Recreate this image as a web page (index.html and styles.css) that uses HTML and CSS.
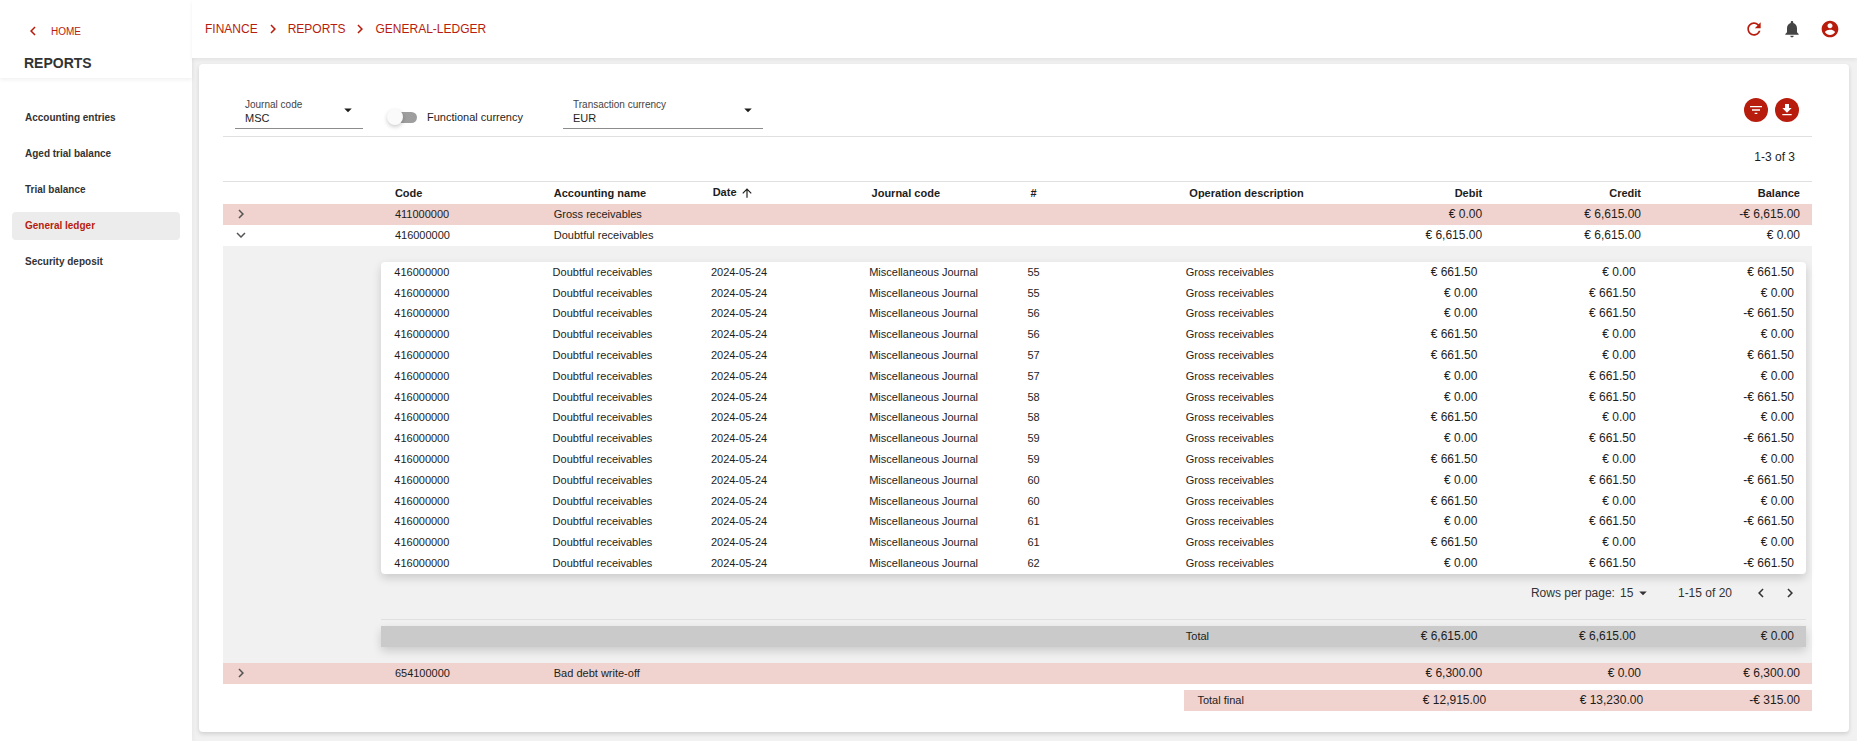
FILE: index.html
```html
<!DOCTYPE html>
<html lang="en">
<head>
    <meta charset="UTF-8">
    <meta name="viewport" content="width=device-width, initial-scale=1.0">
    <title>General ledger</title>
    <link rel="stylesheet" href="styles.css">
</head>
<body>
    <!-- Icons shared by the page -->
    <svg class="icon-defs" aria-hidden="true">
        <symbol id="chevron-left" viewBox="0 0 24 24"><path d="M15.41 7.41 14 6l-6 6 6 6 1.41-1.41L10.83 12z"/></symbol>
        <symbol id="chevron-right" viewBox="0 0 24 24"><path d="M10 6 8.59 7.41 13.17 12l-4.58 4.59L10 18l6-6z"/></symbol>
        <symbol id="chevron-down" viewBox="0 0 24 24"><path d="M16.59 8.59 12 13.17 7.41 8.59 6 10l6 6 6-6z"/></symbol>
        <symbol id="arrow-drop-down" viewBox="0 0 24 24"><path d="m7 10 5 5 5-5z"/></symbol>
        <symbol id="arrow-up" viewBox="0 0 24 24"><path d="m4 12 1.41 1.41L11 7.83V20h2V7.83l5.58 5.59L20 12l-8-8z"/></symbol>
        <symbol id="refresh" viewBox="0 0 24 24"><path d="M17.65 6.35C16.2 4.9 14.21 4 12 4c-4.42 0-7.99 3.58-7.99 8s3.57 8 7.99 8c3.73 0 6.84-2.55 7.73-6h-2.08c-.82 2.33-3.04 4-5.65 4-3.31 0-6-2.69-6-6s2.69-6 6-6c1.66 0 3.14.69 4.22 1.78L13 11h7V4z"/></symbol>
        <symbol id="bell" viewBox="0 0 24 24"><path d="M12 22c1.1 0 2-.9 2-2h-4c0 1.1.89 2 2 2m6-6v-5c0-3.07-1.64-5.64-4.5-6.32V4c0-.83-.67-1.5-1.5-1.5s-1.5.67-1.5 1.5v.68C7.63 5.36 6 7.92 6 11v5l-2 2v1h16v-1z"/></symbol>
        <symbol id="account" viewBox="0 0 24 24"><path d="M12 2C6.48 2 2 6.48 2 12s4.48 10 10 10 10-4.48 10-10S17.52 2 12 2m0 3c1.66 0 3 1.34 3 3s-1.34 3-3 3-3-1.34-3-3 1.34-3 3-3m0 14.2c-2.5 0-4.71-1.28-6-3.22.03-1.99 4-3.08 6-3.08 1.99 0 5.97 1.09 6 3.08-1.29 1.94-3.5 3.22-6 3.22"/></symbol>
        <symbol id="filter" viewBox="0 0 24 24"><path d="M10 18h4v-2h-4zM3 6v2h18V6zm3 7h12v-2H6z"/></symbol>
        <symbol id="download" viewBox="0 0 24 24"><path d="M19 9h-4V3H9v6H5l7 7zM5 18v2h14v-2z"/></symbol>
    </svg>

    <aside class="sidebar">
        <div class="sidebar-header">
            <a href="#" class="home-link"><svg class="icon"><use href="#chevron-left"/></svg>HOME</a>
            <h1>REPORTS</h1>
        </div>
        <nav class="menu">
            <a href="#">Accounting entries</a>
            <a href="#">Aged trial balance</a>
            <a href="#">Trial balance</a>
            <a href="#" class="active">General ledger</a>
            <a href="#">Security deposit</a>
        </nav>
    </aside>

    <div class="page">
        <header class="topbar">
            <nav class="breadcrumbs">
                <a href="#">FINANCE</a>
                <svg class="icon"><use href="#chevron-right"/></svg>
                <a href="#">REPORTS</a>
                <svg class="icon"><use href="#chevron-right"/></svg>
                <a href="#">GENERAL-LEDGER</a>
            </nav>
            <div class="topbar-actions">
                <button aria-label="Refresh"><svg><use href="#refresh"/></svg></button>
                <button aria-label="Notifications" class="bell"><svg><use href="#bell"/></svg></button>
                <button aria-label="Account"><svg><use href="#account"/></svg></button>
            </div>
        </header>

        <main class="card">
            <div class="toolbar">
                <div class="field field-journal">
                    <label for="journal">Journal code</label>
                    <select id="journal"><option>MSC</option></select>
                    <svg class="icon"><use href="#arrow-drop-down"/></svg>
                </div>
                <label class="switch">
                    <input type="checkbox">
                    <span>Functional currency</span>
                </label>
                <div class="field field-currency">
                    <label for="currency">Transaction currency</label>
                    <select id="currency"><option>EUR</option></select>
                    <svg class="icon"><use href="#arrow-drop-down"/></svg>
                </div>
                <div class="toolbar-actions">
                    <button aria-label="Filter"><svg><use href="#filter"/></svg></button>
                    <button aria-label="Download"><svg><use href="#download"/></svg></button>
                </div>
            </div>

            <div class="count">1-3 of 3</div>

            <table class="ledger">
                <thead>
                    <tr>
                        <th></th>
                        <th>Code</th>
                        <th>Accounting name</th>
                        <th>Date <svg class="sort"><use href="#arrow-up"/></svg></th>
                        <th>Journal code</th>
                        <th>#</th>
                        <th>Operation description</th>
                        <th class="amount">Debit</th>
                        <th class="amount">Credit</th>
                        <th class="amount">Balance</th>
                    </tr>
                </thead>
                <tbody>
                    <tr class="highlight">
                        <td><button class="expand" aria-label="Expand"><svg class="icon"><use href="#chevron-right"/></svg></button></td>
                        <td>411000000</td>
                        <td>Gross receivables</td>
                        <td></td><td></td><td></td><td></td>
                        <td class="amount">€ 0.00</td>
                        <td class="amount">€ 6,615.00</td>
                        <td class="amount">-€ 6,615.00</td>
                    </tr>
                    <tr>
                        <td><button class="expand" aria-label="Collapse"><svg class="icon"><use href="#chevron-down"/></svg></button></td>
                        <td>416000000</td>
                        <td>Doubtful receivables</td>
                        <td></td><td></td><td></td><td></td>
                        <td class="amount">€ 6,615.00</td>
                        <td class="amount">€ 6,615.00</td>
                        <td class="amount">€ 0.00</td>
                    </tr>
                    <tr>
                        <td colspan="10" class="details">
                            <div class="details-content">
                                <table class="entries">
                                    <tbody>
                                        <tr><td>416000000</td><td>Doubtful receivables</td><td>2024-05-24</td><td>Miscellaneous Journal</td><td>55</td><td>Gross receivables</td><td class="amount">€ 661.50</td><td class="amount">€ 0.00</td><td class="amount">€ 661.50</td></tr>
                                        <tr><td>416000000</td><td>Doubtful receivables</td><td>2024-05-24</td><td>Miscellaneous Journal</td><td>55</td><td>Gross receivables</td><td class="amount">€ 0.00</td><td class="amount">€ 661.50</td><td class="amount">€ 0.00</td></tr>
                                        <tr><td>416000000</td><td>Doubtful receivables</td><td>2024-05-24</td><td>Miscellaneous Journal</td><td>56</td><td>Gross receivables</td><td class="amount">€ 0.00</td><td class="amount">€ 661.50</td><td class="amount">-€ 661.50</td></tr>
                                        <tr><td>416000000</td><td>Doubtful receivables</td><td>2024-05-24</td><td>Miscellaneous Journal</td><td>56</td><td>Gross receivables</td><td class="amount">€ 661.50</td><td class="amount">€ 0.00</td><td class="amount">€ 0.00</td></tr>
                                        <tr><td>416000000</td><td>Doubtful receivables</td><td>2024-05-24</td><td>Miscellaneous Journal</td><td>57</td><td>Gross receivables</td><td class="amount">€ 661.50</td><td class="amount">€ 0.00</td><td class="amount">€ 661.50</td></tr>
                                        <tr><td>416000000</td><td>Doubtful receivables</td><td>2024-05-24</td><td>Miscellaneous Journal</td><td>57</td><td>Gross receivables</td><td class="amount">€ 0.00</td><td class="amount">€ 661.50</td><td class="amount">€ 0.00</td></tr>
                                        <tr><td>416000000</td><td>Doubtful receivables</td><td>2024-05-24</td><td>Miscellaneous Journal</td><td>58</td><td>Gross receivables</td><td class="amount">€ 0.00</td><td class="amount">€ 661.50</td><td class="amount">-€ 661.50</td></tr>
                                        <tr><td>416000000</td><td>Doubtful receivables</td><td>2024-05-24</td><td>Miscellaneous Journal</td><td>58</td><td>Gross receivables</td><td class="amount">€ 661.50</td><td class="amount">€ 0.00</td><td class="amount">€ 0.00</td></tr>
                                        <tr><td>416000000</td><td>Doubtful receivables</td><td>2024-05-24</td><td>Miscellaneous Journal</td><td>59</td><td>Gross receivables</td><td class="amount">€ 0.00</td><td class="amount">€ 661.50</td><td class="amount">-€ 661.50</td></tr>
                                        <tr><td>416000000</td><td>Doubtful receivables</td><td>2024-05-24</td><td>Miscellaneous Journal</td><td>59</td><td>Gross receivables</td><td class="amount">€ 661.50</td><td class="amount">€ 0.00</td><td class="amount">€ 0.00</td></tr>
                                        <tr><td>416000000</td><td>Doubtful receivables</td><td>2024-05-24</td><td>Miscellaneous Journal</td><td>60</td><td>Gross receivables</td><td class="amount">€ 0.00</td><td class="amount">€ 661.50</td><td class="amount">-€ 661.50</td></tr>
                                        <tr><td>416000000</td><td>Doubtful receivables</td><td>2024-05-24</td><td>Miscellaneous Journal</td><td>60</td><td>Gross receivables</td><td class="amount">€ 661.50</td><td class="amount">€ 0.00</td><td class="amount">€ 0.00</td></tr>
                                        <tr><td>416000000</td><td>Doubtful receivables</td><td>2024-05-24</td><td>Miscellaneous Journal</td><td>61</td><td>Gross receivables</td><td class="amount">€ 0.00</td><td class="amount">€ 661.50</td><td class="amount">-€ 661.50</td></tr>
                                        <tr><td>416000000</td><td>Doubtful receivables</td><td>2024-05-24</td><td>Miscellaneous Journal</td><td>61</td><td>Gross receivables</td><td class="amount">€ 661.50</td><td class="amount">€ 0.00</td><td class="amount">€ 0.00</td></tr>
                                        <tr><td>416000000</td><td>Doubtful receivables</td><td>2024-05-24</td><td>Miscellaneous Journal</td><td>62</td><td>Gross receivables</td><td class="amount">€ 0.00</td><td class="amount">€ 661.50</td><td class="amount">-€ 661.50</td></tr>
                                    </tbody>
                                </table>

                                <div class="pagination">
                                    <label for="rows">Rows per page:</label>
                                    <div class="rows-select">
                                        <select id="rows"><option>15</option></select>
                                        <svg class="icon"><use href="#arrow-drop-down"/></svg>
                                    </div>
                                    <span class="range">1-15 of 20</span>
                                    <button aria-label="Previous page"><svg class="icon"><use href="#chevron-left"/></svg></button>
                                    <button aria-label="Next page"><svg class="icon"><use href="#chevron-right"/></svg></button>
                                </div>

                                <table class="subtotal">
                                    <tbody>
                                        <tr>
                                            <td colspan="5"></td>
                                            <td>Total</td>
                                            <td class="amount">€ 6,615.00</td>
                                            <td class="amount">€ 6,615.00</td>
                                            <td class="amount">€ 0.00</td>
                                        </tr>
                                    </tbody>
                                </table>
                            </div>
                        </td>
                    </tr>
                    <tr class="highlight">
                        <td><button class="expand" aria-label="Expand"><svg class="icon"><use href="#chevron-right"/></svg></button></td>
                        <td>654100000</td>
                        <td>Bad debt write-off</td>
                        <td></td><td></td><td></td><td></td>
                        <td class="amount">€ 6,300.00</td>
                        <td class="amount">€ 0.00</td>
                        <td class="amount">€ 6,300.00</td>
                    </tr>
                </tbody>
            </table>

            <table class="total-final">
                <tbody>
                    <tr class="highlight">
                        <td>Total final</td>
                        <td class="amount">€ 12,915.00</td>
                        <td class="amount">€ 13,230.00</td>
                        <td class="amount">-€ 315.00</td>
                    </tr>
                </tbody>
            </table>
        </main>
    </div>
</body>
</html>
```
FILE: styles.css
```css
* {
    box-sizing: border-box;
}

body {
    margin: 0;
    min-height: 100vh;
    display: flex;
    background-color: #f1f1f1;
    color: #1d1d1b;
    font-family: Arial, "Liberation Sans", sans-serif;
    font-size: 11px;
}

a {
    color: #b71c0c;
    text-decoration: none;
}

a:hover {
    text-decoration: underline;
}

button {
    display: flex;
    align-items: center;
    justify-content: center;
    padding: 0;
    border: none;
    background: none;
    color: inherit;
    cursor: pointer;
}

select {
    appearance: none;
    padding: 0;
    border: none;
    background: none;
    color: inherit;
    font: inherit;
}

svg {
    fill: currentColor;
}

.icon-defs {
    display: none;
}

.icon {
    width: 18px;
    height: 18px;
}

/* Sidebar */
.sidebar {
    flex: 0 0 192px;
    background-color: #fff;
    box-shadow: 0 0 6px rgba(0, 0, 0, 0.06);
}

.sidebar-header {
    height: 78px;
    padding: 22px 24px 0;
    box-shadow: 0 2px 4px rgba(0, 0, 0, 0.06);
}

.home-link {
    display: flex;
    align-items: center;
    gap: 9px;
    font-size: 10px;
}

.sidebar h1 {
    margin: 15px 0 0;
    font-size: 14px;
    line-height: 16px;
    color: #333;
}

.menu {
    display: flex;
    flex-direction: column;
    gap: 8px;
    padding: 26px 12px;
}

.menu a {
    padding: 0 13px;
    border-radius: 4px;
    color: #333;
    font-size: 10px;
    font-weight: bold;
    line-height: 28px;
}

.menu a.active {
    background-color: #ececec;
    color: #b71c0c;
}

/* Top bar */
.page {
    flex: 1;
    min-width: 0;
}

.topbar {
    display: flex;
    align-items: center;
    justify-content: space-between;
    height: 58px;
    padding: 0 17px 0 13px;
    background-color: #fff;
    box-shadow: 0 2px 4px rgba(0, 0, 0, 0.06);
}

.breadcrumbs {
    display: flex;
    align-items: center;
    gap: 6px;
    color: #b71c0c;
    font-size: 12px;
}

.topbar-actions {
    display: flex;
    gap: 18px;
    color: #b71c0c;
}

.topbar-actions svg {
    width: 20px;
    height: 20px;
}

.topbar-actions .bell {
    color: #444;
}

/* Card */
.card {
    margin: 6px 8px 10px 7px;
    padding: 28px 37px 21px 24px;
    background-color: #fff;
    border-radius: 4px;
    box-shadow: 0 2px 4px rgba(0, 0, 0, 0.14);
}

.toolbar {
    display: flex;
    padding: 6px 13px 7px 12px;
    border-bottom: 1px solid #e0e0e0;
}

.field {
    display: grid;
    grid-template: 14px 16px / 1fr 18px;
    padding: 0 6px 0 10px;
    border-bottom: 1px solid #8c8c8c;
}

.field label {
    grid-area: 1 / 1;
    color: #444;
    font-size: 10px;
    line-height: 14px;
}

.field select {
    grid-area: 2 / 1 / 3 / 3;
    margin-bottom: 5px;
}

.field .icon {
    grid-area: 1 / 2 / 3 / 3;
    margin-top: 3px;
    pointer-events: none;
}

.field-journal {
    width: 128px;
}

.field-currency {
    width: 200px;
    margin-left: 40px;
}

.switch {
    display: flex;
    align-items: center;
    gap: 10px;
    margin-left: 28px;
    padding-top: 7px;
}

.switch input {
    appearance: none;
    display: flex;
    align-items: center;
    width: 26px;
    height: 11px;
    margin: 0;
    border-radius: 6px;
    background-color: #9e9e9e;
}

.switch input::before {
    content: "";
    width: 16px;
    height: 16px;
    margin-left: -4px;
    border-radius: 50%;
    background-color: #fafafa;
    box-shadow: 0 2px 4px rgba(0, 0, 0, 0.2);
}

.switch input:checked::before {
    margin-left: 14px;
}

.toolbar-actions {
    display: flex;
    gap: 7px;
    margin-left: auto;
}

.toolbar-actions button {
    width: 24px;
    height: 24px;
    border-radius: 50%;
    background-color: #b71c0c;
    color: #fff;
}

.toolbar-actions svg {
    width: 16px;
    height: 16px;
}

.count {
    padding: 0 17px 4px;
    font-size: 12px;
    line-height: 40px;
    text-align: right;
}

/* Tables */
table {
    width: 100%;
    border-collapse: collapse;
    table-layout: fixed;
}

th,
td {
    height: 21px;
    padding: 0 12px 0 13px;
    text-align: left;
    white-space: nowrap;
}

th {
    height: 22px;
}

.amount {
    text-align: right;
}

td.amount {
    font-size: 12px;
}

.ledger {
    border-top: 1px solid #e0e0e0;
}

.highlight {
    background-color: #f0d2ce;
}

.sort {
    width: 14px;
    height: 14px;
    vertical-align: middle;
}

.expand {
    margin-left: -4px;
    color: #555;
}

.ledger .details {
    padding: 16px 6px 16px 0;
    background-color: #f1f1f1;
}

.details-content {
    margin-left: 10%;
}

.entries {
    height: 312px;
    border-radius: 4px;
    background-color: #fff;
    box-shadow: 0 4px 10px rgba(0, 0, 0, 0.16);
}

.entries td {
    height: 20px;
}

.pagination {
    display: flex;
    align-items: center;
    justify-content: flex-end;
    height: 46px;
    padding: 0 7px 6px 0;
    border-bottom: 1px solid #e0e0e0;
    color: #333;
    font-size: 12px;
}

.rows-select {
    display: grid;
    grid-template-columns: 14px 18px;
    align-items: center;
    margin: 0 26px 0 5px;
}

.rows-select select {
    grid-area: 1 / 1 / 2 / 3;
}

.rows-select .icon {
    grid-area: 1 / 2;
    pointer-events: none;
}

.range {
    margin-right: 20px;
}

.pagination button + button {
    margin-left: 11px;
}

.subtotal {
    margin-top: 6px;
    background-color: #cacaca;
    box-shadow: 0 4px 10px rgba(0, 0, 0, 0.16);
}

.total-final {
    width: calc(40% - 8px);
    margin: 6px 0 0 auto;
}
```
